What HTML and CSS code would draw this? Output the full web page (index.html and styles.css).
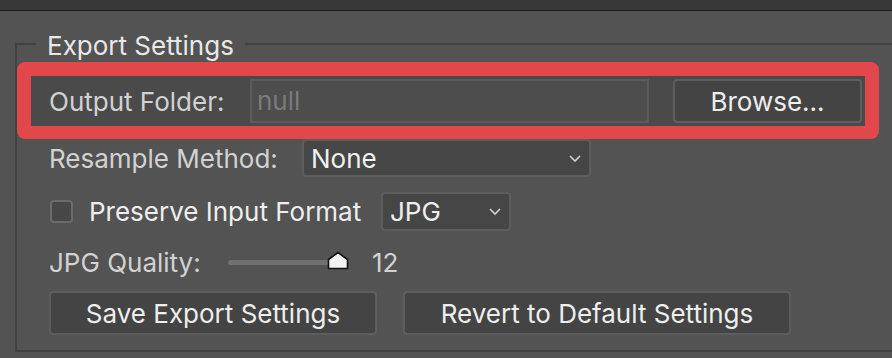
FILE: index.html
```html
<!DOCTYPE html>
<html lang="en">

<head>
    <meta charset="UTF-8">
    <meta name="viewport" content="width=device-width, initial-scale=1.0">
    <link rel="stylesheet" href="styles.css">
    <title>Export Settings</title>
</head>

<body>
    <div class="topBar"></div>
    <div class="panel">
        <fieldset class="group">
            <legend>Export Settings</legend>

            <div class="highlight">
                <span class="label labelOutput">Output Folder:</span>
                <div class="textField">null</div>
                <button class="btn btnBrowse">Browse...</button>
            </div>

            <div class="row rowResample">
                <span class="label labelResample">Resample Method:</span>
                <div class="select selectMethod">
                    <span>None</span>
                    <svg class="chevron" width="12" height="7" viewBox="0 0 12 7"><path d="M1 1l5 5 5-5" fill="none" stroke="#d4d4d4" stroke-width="1.6"/></svg>
                </div>
            </div>

            <div class="row rowPreserve">
                <div class="checkbox"></div>
                <span class="checkText">Preserve Input Format</span>
                <div class="select selectFormat">
                    <span>JPG</span>
                    <svg class="chevron" width="12" height="7" viewBox="0 0 12 7"><path d="M1 1l5 5 5-5" fill="none" stroke="#d4d4d4" stroke-width="1.6"/></svg>
                </div>
            </div>

            <div class="row rowQuality">
                <span class="label labelQuality">JPG Quality:</span>
                <div class="slider">
                    <div class="track"></div>
                    <svg class="thumb" width="22" height="19" viewBox="0 0 22 19"><path d="M1.5 17.5V8.5L11 1.5l9.5 7v9z" fill="#f2f2f2" stroke="#111" stroke-width="1.6" stroke-linejoin="round"/></svg>
                </div>
                <span class="value">12</span>
            </div>

            <div class="row rowButtons">
                <button class="btn btnSave">Save Export Settings</button>
                <button class="btn btnRevert">Revert to Default Settings</button>
            </div>
        </fieldset>
    </div>
</body>

</html>
```

FILE: styles.css
```css
body {
    margin: 0;
    background-color: #535353;
    font-family: Inter, "Liberation Sans", sans-serif;
    font-size: 26px;
    color: #d2d2d2;
    overflow: hidden;
}

.topBar {
    height: 10px;
    background-color: #38383a;
    border-bottom: 1px solid #1c1c1c;
}

.panel {
    padding-top: 17px;
}

.group {
    margin: 0 -40px 0 15px;
    padding: 2px 0 15px 0;
    border: 2px solid #414141;
    min-width: 0;
}

.group legend {
    margin-left: 19px;
    padding: 4px 11px 0;
    line-height: 28px;
    color: #e8e8e8;
}

.highlight {
    display: flex;
    align-items: center;
    box-sizing: border-box;
    width: 862px;
    height: 77px;
    padding: 0 3px 0 18px;
    border: 14px solid #e2474b;
    border-bottom-width: 13px;
    border-radius: 8px;
    background-color: #4a4a4a;
}

.label {
    flex: none;
}

.labelOutput {
    width: 201px;
}

.textField {
    width: 399px;
    height: 44px;
    box-sizing: border-box;
    border: 2px solid #5b5b5b;
    background-color: #4d4d4d;
    color: #7b7b7b;
    padding-left: 5px;
    line-height: 40px;
}

.btn {
    height: 44px;
    box-sizing: border-box;
    border: 2px solid #5e5e5e;
    border-radius: 4px;
    background-color: #444444;
    color: #eeeeee;
    font-family: inherit;
    font-size: 26px;
    padding: 0;
}

.btnBrowse {
    width: 189px;
    margin-left: 24px;
}

.row {
    display: flex;
    align-items: center;
    padding-left: 32px;
}

.labelResample {
    width: 253px;
}

.select {
    display: flex;
    align-items: center;
    justify-content: space-between;
    box-sizing: border-box;
    border: 2px solid #5d5d5d;
    border-radius: 4px;
    background-color: #464646;
    color: #f0f0f0;
    padding: 0 8px 0 7px;
}

.selectMethod {
    width: 289px;
    height: 38px;
}

.selectFormat {
    width: 130px;
    height: 39px;
}

.rowPreserve {
    margin-top: 15px;
}

.checkbox {
    flex: none;
    width: 23px;
    height: 23px;
    box-sizing: border-box;
    margin-left: 1px;
    border: 2px solid #6b6b6b;
    border-radius: 4px;
    background-color: #474747;
}

.checkText {
    flex: none;
    width: 292px;
    margin-left: 16px;
    color: #eeeeee;
}

.rowQuality {
    margin-top: 18px;
    height: 26px;
}

.labelQuality {
    width: 179px;
}

.slider {
    position: relative;
    width: 119px;
    height: 20px;
    display: flex;
    align-items: center;
}

.track {
    width: 102px;
    height: 5px;
    border-radius: 3px;
    background-color: #707070;
}

.thumb {
    position: absolute;
    right: -2px;
    top: -1px;
}

.value {
    margin-left: 25px;
}

.rowButtons {
    margin-top: 16px;
}

.btnSave {
    width: 328px;
}

.btnRevert {
    width: 388px;
    margin-left: 26px;
}
```
